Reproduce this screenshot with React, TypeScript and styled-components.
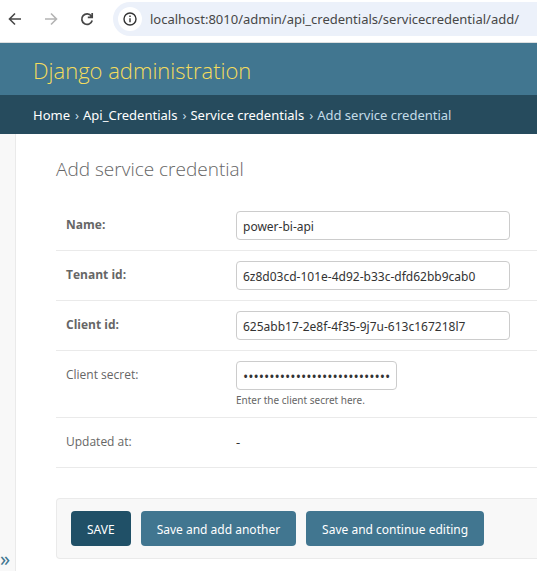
import React from "react";
import styled, { createGlobalStyle } from "styled-components";

const GlobalStyle = createGlobalStyle`
  *, *::before, *::after { box-sizing: border-box; }
  html, body { height: 100%; }
  body {
    margin: 0;
    background: #fff;
    color: #333;
    font-family: "Segoe UI", "Noto Sans", "Open Sans", sans-serif;
    font-size: 13px;
    overflow: hidden;
  }
  #root { height: 100%; }
`;

const Page = styled.div`
  display: flex;
  flex-direction: column;
  height: 100%;
`;

const BrowserBar = styled.div`
  display: flex;
  align-items: center;
  flex: none;
  height: 43px;
  padding: 0 0 5px 5px;
  border-bottom: 1px solid #dcdfe0;
`;

const NavButtons = styled.div`
  display: flex;
  gap: 16px;
  margin-right: 16px;
`;

const NavButton = styled.button`
  display: flex;
  width: 20px;
  height: 20px;
  padding: 0;
  border: 0;
  background: none;
  color: #474747;
  &:disabled { color: #b4b4b4; }
`;

const AddressBar = styled.div`
  display: flex;
  align-items: center;
  flex: 1;
  min-width: 0;
  height: 34px;
  padding-left: 5px;
  border-radius: 17px 0 0 17px;
  background: #ecf1fa;
`;

const SiteInfo = styled.button`
  display: flex;
  align-items: center;
  justify-content: center;
  flex: none;
  width: 24px;
  height: 24px;
  padding: 0;
  border: 0;
  border-radius: 50%;
  background: #fff;
  color: #333;
`;

const UrlInput = styled.input`
  flex: 1;
  min-width: 0;
  padding: 0 0 0 8px;
  border: 0;
  outline: 0;
  background: none;
  color: #474747;
  font-family: inherit;
  font-size: 13px;
`;

const Header = styled.header`
  display: flex;
  align-items: center;
  flex: none;
  height: 52px;
  padding: 2px 33px 0;
  background: #417690;
`;

const SiteName = styled.h1`
  margin: 0;
  color: #f5dd5d;
  font-family: "Segoe UI", "Open Sans", sans-serif;
  font-size: 22px;
  font-weight: 300;
  line-height: 32px;
  white-space: nowrap;
`;

const Breadcrumbs = styled.nav`
  flex: none;
  padding: 10px 33px 9px;
  background: #264b5d;
  color: #c4dce8;
  font-size: 13px;
  line-height: 20px;
  white-space: nowrap;
`;

const Crumb = styled.a`
  color: #fff;
  text-decoration: none;
`;

const Separator = styled.span`
  margin: 0 4px 0 5px;
`;

const Body = styled.div`
  display: flex;
  flex: 1;
  min-height: 0;
`;

const SidebarStrip = styled.aside`
  display: flex;
  align-items: flex-end;
  flex: none;
  width: 16px;
  border-right: 1px solid #eaeaea;
  background: #f8f8f8;
`;

const SidebarToggle = styled.button`
  width: 15px;
  height: 24px;
  padding: 0;
  border: 0;
  background: none;
  color: #417690;
  font-family: inherit;
  font-size: 20px;
  line-height: 24px;
  text-align: left;
`;

const Content = styled.main`
  flex: 1;
  min-width: 0;
  padding: 20px 0 0 40px;
`;

const PageTitle = styled.h2`
  margin: 0 0 17px;
  color: #666;
  font-family: "Segoe UI", "Open Sans", sans-serif;
  font-size: 19px;
  font-weight: 300;
  line-height: 30px;
`;

const FormRow = styled.div`
  display: grid;
  grid-template-columns: 170px 1fr;
  align-items: start;
  padding: 10px 0 10px 10px;
  border-bottom: 1px solid #eaeaea;
`;

const labelText = `
  padding-top: 4px;
  color: #666;
  font-family: "Segoe UI", "Open Sans", sans-serif;
  font-size: 12px;
  line-height: 20px;
`;

const Label = styled.label<{ $required?: boolean }>`
  ${labelText}
  font-weight: ${(p) => (p.$required ? 700 : 400)};
`;

const StaticLabel = styled.div`
  ${labelText}
`;

const ReadOnly = styled.div`
  min-height: 29px;
  padding-top: 4px;
  line-height: 20px;
`;

const TextInput = styled.input`
  display: block;
  width: 274px;
  height: 29px;
  padding: 2px 6px 0;
  border: 1px solid #ccc;
  border-radius: 4px;
  outline: 0;
  background: #fff;
  color: #333;
  font-family: inherit;
  font-size: 12px;
`;

const PasswordInput = styled(TextInput)`
  width: 161px;
  font-family: "Segoe UI", "Open Sans", sans-serif;
  font-size: 14px;
`;

const Help = styled.div`
  padding-top: 3px;
  color: #666;
  font-size: 10px;
  line-height: 14px;
`;

const SubmitRow = styled.div`
  display: flex;
  gap: 10px;
  margin-top: 30px;
  padding: 12px 14px;
  border: 1px solid #eaeaea;
  border-right: 0;
  border-radius: 4px 0 0 4px;
  background: #f8f8f8;
`;

const SubmitButton = styled.button<{ $primary?: boolean }>`
  height: 35px;
  padding: 2px 16px 0;
  border: 0;
  border-radius: 4px;
  background: ${(p) => (p.$primary ? "#205067" : "#417690")};
  color: #fff;
  font-family: inherit;
  font-size: 12px;
  white-space: nowrap;
`;

const ArrowIcon = ({ forward }: { forward?: boolean }) => (
  <svg width="20" height="20" viewBox="0 0 20 20" fill="none" stroke="currentColor" strokeWidth="1.6" aria-hidden="true">
    {forward ? <path d="M4 10h11.5M10 4.5l5.5 5.5-5.5 5.5" /> : <path d="M16 10H4.5M10 4.5L4.5 10l5.5 5.5" />}
  </svg>
);

const ReloadIcon = () => (
  <svg width="20" height="20" viewBox="0 0 20 20" fill="none" stroke="currentColor" strokeWidth="1.7" aria-hidden="true">
    <path d="M14.4 7A5.3 5.3 0 1 0 15.2 11.5" />
    <path d="M15.2 4v4.4H10.8" />
    <path d="M15.6 5v3.8H11.8z" fill="currentColor" stroke="none" />
  </svg>
);

const InfoIcon = () => (
  <svg width="14" height="14" viewBox="0 0 14 14" fill="none" stroke="currentColor" strokeWidth="1.4" aria-hidden="true">
    <circle cx="7" cy="7" r="6" />
    <path d="M7 6.2v4M7 3.6v1.4" />
  </svg>
);

const fields = [
  { id: "name", label: "Name:", value: "power-bi-api" },
  { id: "tenant_id", label: "Tenant id:", value: "6z8d03cd-101e-4d92-b33c-dfd62bb9cab0" },
  { id: "client_id", label: "Client id:", value: "625abb17-2e8f-4f35-9j7u-613c167218l7" },
];

export default function App() {
  return (
    <Page>
      <GlobalStyle />
      <BrowserBar>
        <NavButtons>
          <NavButton aria-label="Back"><ArrowIcon /></NavButton>
          <NavButton aria-label="Forward" disabled><ArrowIcon forward /></NavButton>
          <NavButton aria-label="Reload"><ReloadIcon /></NavButton>
        </NavButtons>
        <AddressBar>
          <SiteInfo aria-label="Site information"><InfoIcon /></SiteInfo>
          <UrlInput aria-label="Address" defaultValue="localhost:8010/admin/api_credentials/servicecredential/add/" />
        </AddressBar>
      </BrowserBar>
      <Header>
        <SiteName>Django administration</SiteName>
      </Header>
      <Breadcrumbs aria-label="Breadcrumbs">
        <Crumb href="#home">Home</Crumb>
        <Separator>›</Separator>
        <Crumb href="#app">Api_Credentials</Crumb>
        <Separator>›</Separator>
        <Crumb href="#model">Service credentials</Crumb>
        <Separator>›</Separator>
        Add service credential
      </Breadcrumbs>
      <Body>
        <SidebarStrip>
          <SidebarToggle aria-label="Toggle navigation">»</SidebarToggle>
        </SidebarStrip>
        <Content>
          <PageTitle>Add service credential</PageTitle>
          <form onSubmit={(e) => e.preventDefault()}>
            {fields.map((f) => (
              <FormRow key={f.id}>
                <Label htmlFor={f.id} $required>{f.label}</Label>
                <TextInput id={f.id} type="text" defaultValue={f.value} />
              </FormRow>
            ))}
            <FormRow>
              <Label htmlFor="client_secret">Client secret:</Label>
              <div>
                <PasswordInput id="client_secret" type="password" defaultValue={"x".repeat(28)} aria-describedby="secret_help" />
                <Help id="secret_help">Enter the client secret here.</Help>
              </div>
            </FormRow>
            <FormRow>
              <StaticLabel>Updated at:</StaticLabel>
              <ReadOnly>-</ReadOnly>
            </FormRow>
            <SubmitRow>
              <SubmitButton type="submit" $primary>SAVE</SubmitButton>
              <SubmitButton type="submit">Save and add another</SubmitButton>
              <SubmitButton type="submit">Save and continue editing</SubmitButton>
            </SubmitRow>
          </form>
        </Content>
      </Body>
    </Page>
  );
}
